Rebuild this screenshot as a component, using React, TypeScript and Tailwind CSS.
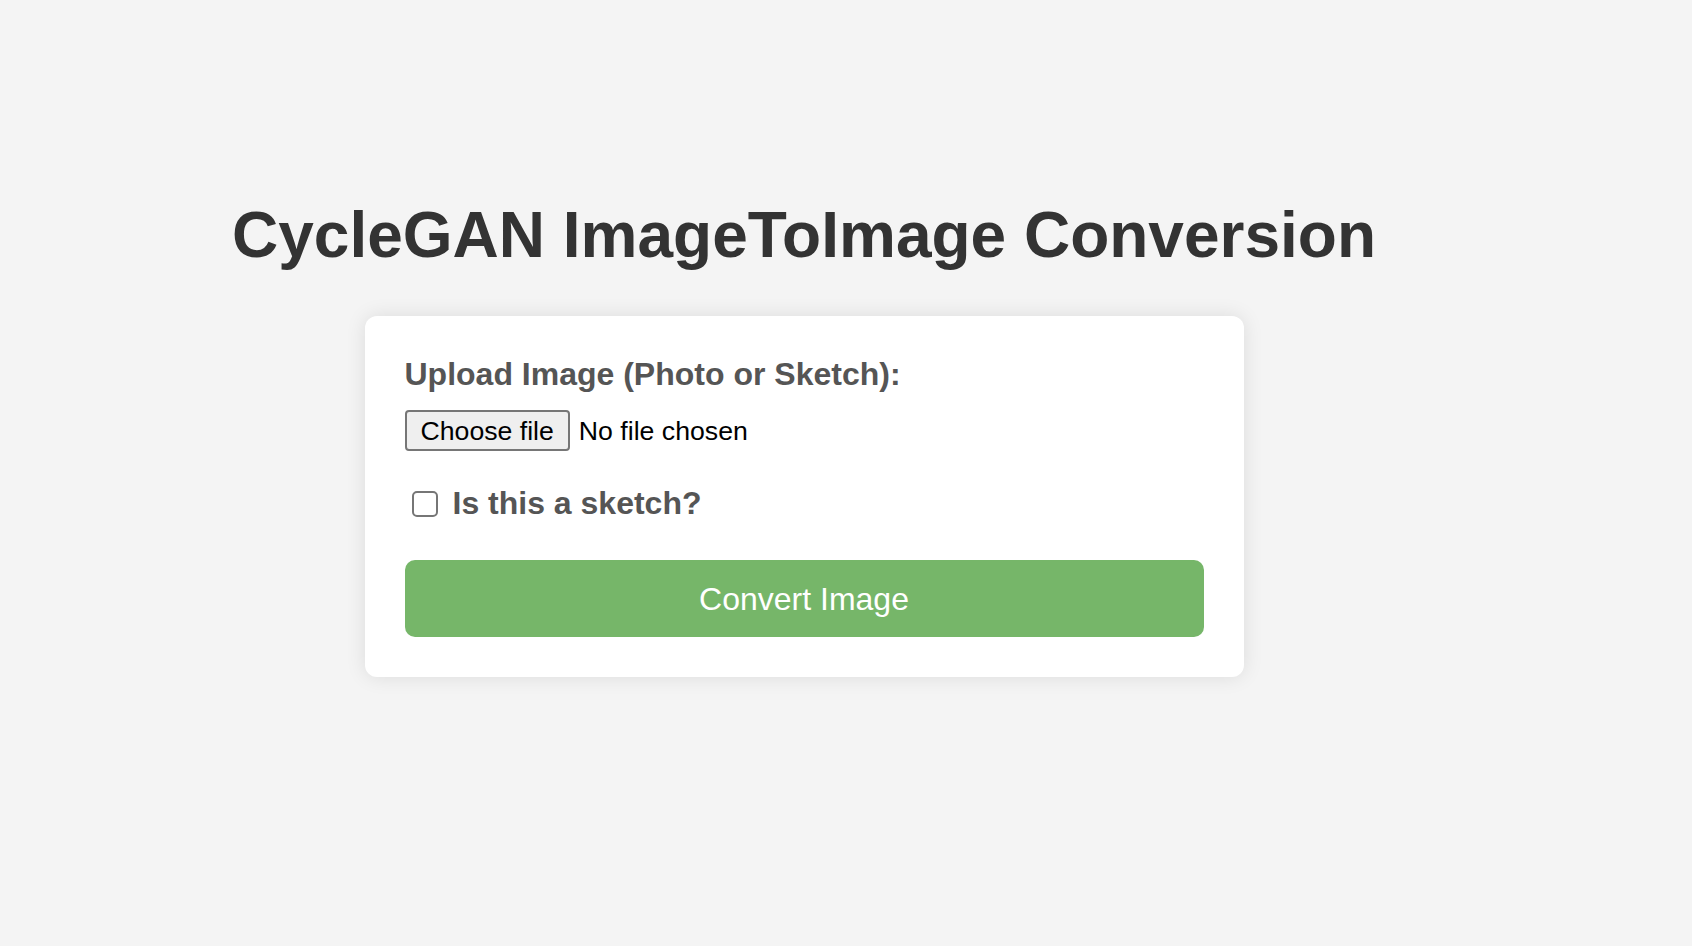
import React, { useState } from 'react';

const App: React.FC = () => {
  const [isSketch, setIsSketch] = useState(false);
  const [fileName, setFileName] = useState<string | null>(null);

  return (
    <div className="min-h-screen w-full bg-[#f4f4f4] font-['Liberation_Sans',Arial,sans-serif]">
      <div className="flex flex-col items-center pt-[198px] pr-[84px]">
        <h1 className="text-[64px] leading-[74px] font-bold text-[#333]">CycleGAN ImageToImage Conversion</h1>

        <div className="mt-[44px] w-[879px] rounded-[12px] bg-white px-[40px] pt-[40px] pb-[40px] shadow-[0_0_20px_rgba(0,0,0,0.1)]">
          <label className="block text-[32px] leading-[37px] font-bold text-[#555]">Upload Image (Photo or Sketch):</label>

          <label className="mt-[17px] flex items-center cursor-pointer">
            <input
              type="file"
              className="hidden"
              onChange={(e) => setFileName(e.target.files?.[0]?.name ?? null)}
            />
            <span className="flex h-[41px] items-center rounded-[4px] border-2 border-[#767676] bg-[#efefef] px-[14px] text-[26.67px] text-black">
              Choose file
            </span>
            <span className="ml-[9px] text-[26.67px] text-black">{fileName ?? 'No file chosen'}</span>
          </label>

          <label className="mt-[34px] flex items-center cursor-pointer">
            <input type="checkbox" className="hidden" checked={isSketch} onChange={() => setIsSketch(!isSketch)} />
            <span
              className={`ml-[7px] h-[26px] w-[26px] rounded-[5px] border-2 border-[#767676] ${isSketch ? 'bg-[#0075ff] border-[#0075ff]' : 'bg-white'}`}
            ></span>
            <span className="ml-[15px] text-[32px] leading-[37px] font-bold text-[#555]">Is this a sketch?</span>
          </label>

          <button className="mt-[38px] h-[77px] w-full rounded-[10px] bg-[#76b669] text-[32px] text-white">
            Convert Image
          </button>
        </div>
      </div>
    </div>
  );
};

export default App;
